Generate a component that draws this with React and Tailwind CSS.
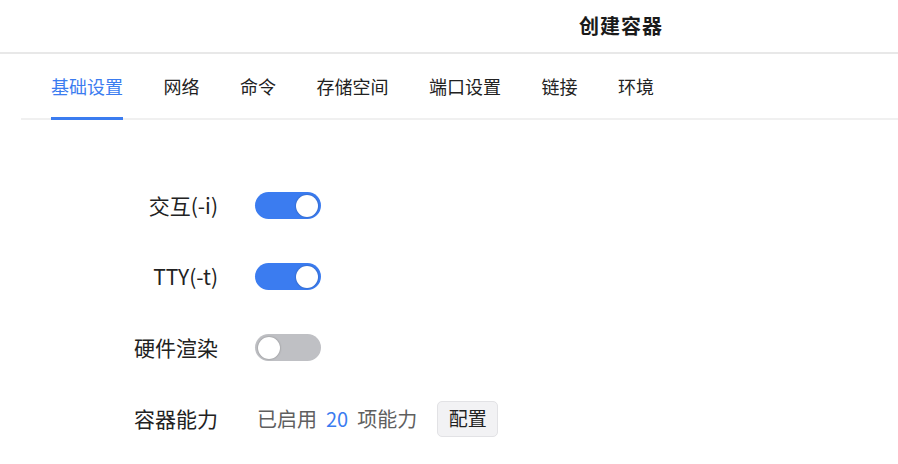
import React, { useState } from "react";

const tabs = ["基础设置", "网络", "命令", "存储空间", "端口设置", "链接", "环境"];

function Toggle({ on, onChange }) {
    return (
        <button
            onClick={() => onChange(!on)}
            className={
                "relative w-[66px] h-[27px] rounded-full transition-colors " +
                (on ? "bg-[#3b7cf0]" : "bg-[#bfc0c4]")
            }
        >
            <span
                className={
                    "absolute top-[2.5px] w-[22px] h-[22px] rounded-full bg-white shadow-[0_0_2px_rgba(0,0,0,0.35)] transition-all " +
                    (on ? "left-[41px]" : "left-[3px]")
                }
            />
        </button>
    );
}

function Row({ label, children }) {
    return (
        <div className="flex items-center h-[71px]">
            <div className="w-[218px] text-right text-[21px] text-[#222]">{label}</div>
            <div className="ml-[37px] flex items-center">{children}</div>
        </div>
    );
}

export default function App() {
    const [active, setActive] = useState(0);
    const [interactive, setInteractive] = useState(true);
    const [tty, setTty] = useState(true);
    const [hw, setHw] = useState(false);

    return (
        <div
            className="w-[898px] h-[464px] overflow-hidden bg-white"
            style={{ fontFamily: '"Noto Sans CJK SC", "Noto Sans", sans-serif' }}
        >
            <div className="h-[54px] border-b-2 border-[#e8e8e8] flex items-center pl-[579px]">
                <h1 className="text-[20px] font-bold text-[#1a1a1a] tracking-[1px]">创建容器</h1>
            </div>

            <div className="ml-[21px] border-b-2 border-[#f0f0f0] flex pl-[30px] gap-[40.5px] h-[66px]">
                {tabs.map((t, i) => (
                    <button
                        key={t}
                        onClick={() => setActive(i)}
                        className={
                            "relative h-full text-[18px] " +
                            (i === active ? "text-[#3b7cf0]" : "text-[#222]")
                        }
                    >
                        {t}
                        {i === active && (
                            <span className="absolute left-0 right-0 bottom-[-2px] h-[3px] bg-[#3b7cf0]" />
                        )}
                    </button>
                ))}
            </div>

            <div className="pt-[50px]">
                <Row label="交互(-i)">
                    <Toggle on={interactive} onChange={setInteractive} />
                </Row>
                <Row label="TTY(-t)">
                    <Toggle on={tty} onChange={setTty} />
                </Row>
                <Row label="硬件渲染">
                    <Toggle on={hw} onChange={setHw} />
                </Row>
                <Row label="容器能力">
                    <span className="ml-[2px] text-[20px] text-[#5f5f5f]">
                        已启用<span className="mx-[9px] text-[#3b7cf0]">20</span>项能力
                    </span>
                    <button className="ml-[20px] w-[61px] h-[36px] rounded-[5px] bg-[#f2f2f4] border border-[#e2e2e5] text-[19px] text-[#222]">
                        配置
                    </button>
                </Row>
            </div>
        </div>
    );
}
